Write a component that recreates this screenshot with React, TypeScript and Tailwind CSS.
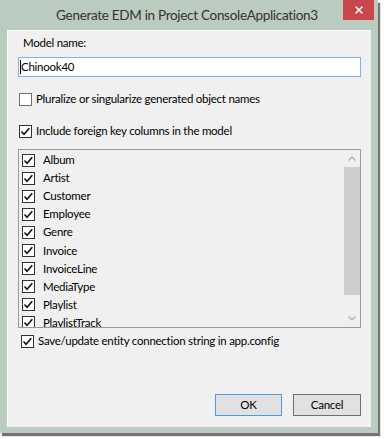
import { X } from "lucide-react";

const tables = [
  "Album",
  "Artist",
  "Customer",
  "Employee",
  "Genre",
  "Invoice",
  "InvoiceLine",
  "MediaType",
  "Playlist",
  "PlaylistTrack",
];

function Box({ checked }: { checked?: boolean }) {
  return (
    <span className="flex h-[13px] w-[13px] shrink-0 items-center justify-center border border-[#333] bg-white">
      {checked && (
        <svg width="11" height="11" viewBox="0 0 11 11">
          <path d="M1.5 5.5 L4 8.2 L9.3 2.2" fill="none" stroke="#111" strokeWidth="1.6" />
        </svg>
      )}
    </span>
  );
}

export default function App() {
  return (
    <div className="h-[439px] w-[384px] bg-white font-['Lato',sans-serif] text-[11.5px] leading-4 tracking-[-0.25px] text-black">
      <div className="flex h-[433px] w-[378px] flex-col bg-[#b9ccbf] shadow-[2px_3px_1px_rgba(0,0,0,0.55)]">
        {/* title bar */}
        <div className="relative flex h-[30px] shrink-0 items-center justify-center">
          <span className="pb-[1px] pr-[4px] text-[13.5px] tracking-[-0.3px] text-[#333]">Generate EDM in Project ConsoleApplication3</span>
          <div className="absolute right-[4px] top-0 flex h-[20px] w-[31px] items-center justify-center bg-[#c9474c] text-white">
            <X size={12} strokeWidth={3} />
          </div>
        </div>

        {/* client */}
        <div className="mx-[7px] flex h-[397px] flex-col border-l border-t border-[#fafafa] bg-[#f0f0f0] px-[10px] pb-[11px]">
          <div className="ml-[5px] mt-[4px]">Model name:</div>
          <div className="mt-[6px] flex h-[20px] items-center border border-[#7eb4ea] bg-white pl-[1px]">
            <span className="h-[14px] w-px bg-black" />
            <span>Chinook40</span>
          </div>

          <label className="ml-[1px] mt-[14px] flex h-4 items-center gap-[4px]">
            <span className="h-[13px] w-[13px] shrink-0 border border-[#707070] bg-white" />
            Pluralize or singularize generated object names
          </label>
          <label className="ml-[1px] mt-[16px] flex h-4 items-center gap-[4px]">
            <Box checked />
            Include foreign key columns in the model
          </label>

          {/* table list */}
          <div className="mt-[10px] flex h-[179px] overflow-hidden border border-[#9a9a9a] bg-[#f0f0f0]">
            <div className="flex-1 pl-[3px] pt-[1px]">
              {tables.map((t) => (
                <div key={t} className="flex h-[18.1px] items-center gap-[8px]">
                  <Box checked />
                  <span>{t}</span>
                </div>
              ))}
            </div>
            <div className="flex w-[16px] flex-col bg-[#f0f0f0]">
              <div className="flex h-[17px] items-center justify-center">
                <svg width="8" height="5" viewBox="0 0 8 5">
                  <path d="M0.5 4.5 L4 1 L7.5 4.5" fill="none" stroke="#a6a6a6" strokeWidth="1.2" />
                </svg>
              </div>
              <div className="h-[128px] bg-[#cdcdcd]" />
              <div className="flex-1" />
              <div className="flex h-[17px] items-center justify-center">
                <svg width="8" height="5" viewBox="0 0 8 5">
                  <path d="M0.5 0.5 L4 4 L7.5 0.5" fill="none" stroke="#a6a6a6" strokeWidth="1.2" />
                </svg>
              </div>
            </div>
          </div>

          <label className="ml-[3px] mt-[5px] flex h-4 items-center gap-[4px]">
            <Box checked />
            Save/update entity connection string in app.config
          </label>

          <div className="mt-auto flex justify-end gap-[11px]">
            <button className="h-[22px] w-[67px] border border-[#4c9be8] bg-[#e1e1e1]">OK</button>
            <button className="h-[22px] w-[68px] border border-[#707070] bg-[#e1e1e1]">Cancel</button>
          </div>
        </div>
      </div>
    </div>
  );
}
